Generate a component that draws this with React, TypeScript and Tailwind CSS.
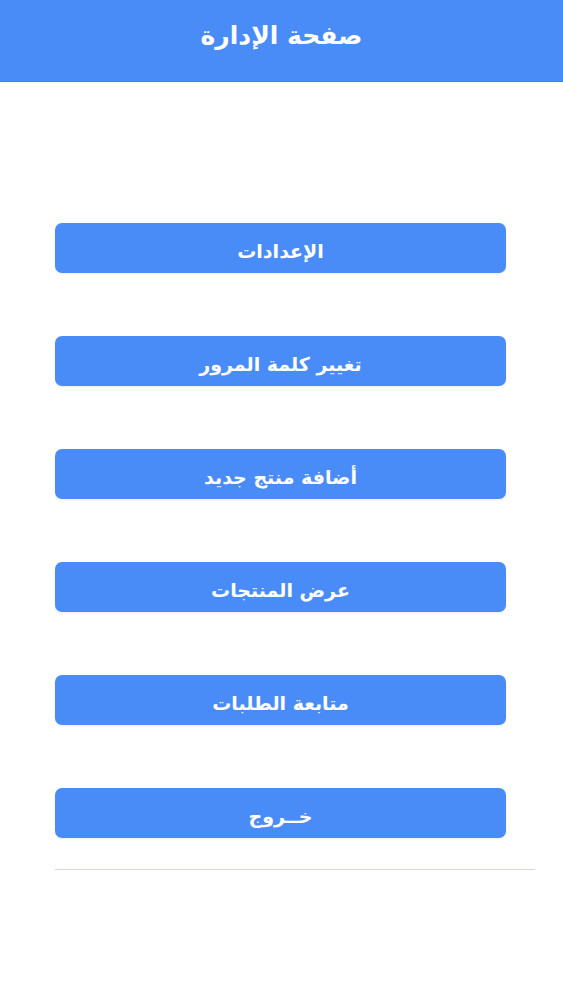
import React from "react";

const items = [
  "الإعدادات",
  "تغيير كلمة المرور",
  "أضافة منتج جديد",
  "عرض المنتجات",
  "متابعة الطلبات",
  "خــروج",
];

export default function App() {
  return (
    <div
      dir="rtl"
      className="w-[563px] h-[1000px] bg-white"
      style={{ fontFamily: '"DejaVu Sans", "Noto Sans", sans-serif' }}
    >
      <header className="h-[82px] bg-[#4a8cf7] flex items-center justify-center pb-[10px] border-b border-[#3f7ee6]">
        <h1 className="text-white text-[25px] font-bold">صفحة الإدارة</h1>
      </header>
      <div className="pt-[141px] flex flex-col items-start pr-[57px] pl-[55px]">
        <div className="w-[451px] flex flex-col gap-[63px]">
          {items.map((t) => (
            <button
              key={t}
              className="h-[50px] w-full rounded-[7px] bg-[#4a8cf7] text-white text-[19px] font-bold flex items-center justify-center pt-[6px] shadow-[0_1px_3px_rgba(0,0,0,0.08)]"
            >
              {t}
            </button>
          ))}
        </div>
      </div>
      <div className="mt-[31px] ml-[55px] mr-[28px] h-px bg-[#d3d8df]" />
    </div>
  );
}
